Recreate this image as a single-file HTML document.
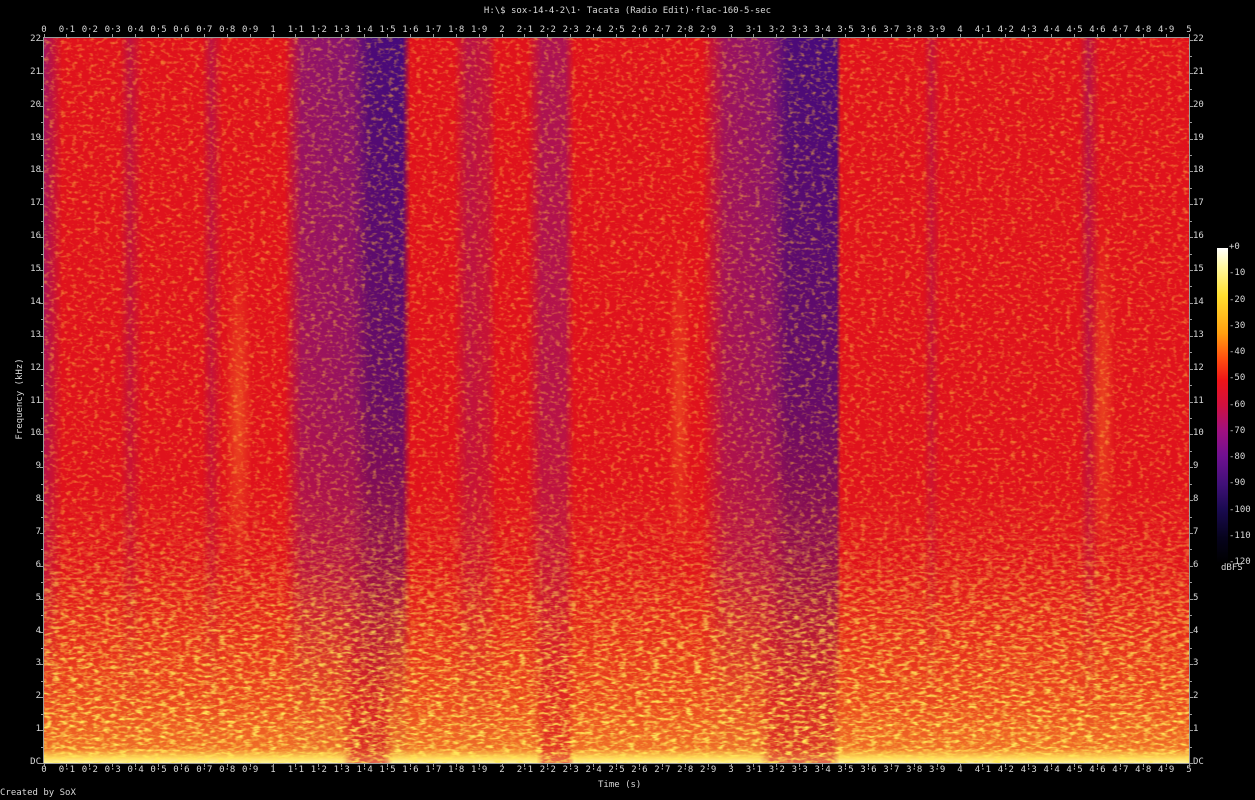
<!DOCTYPE html>
<html><head><meta charset="utf-8">
<style>
html,body{margin:0;padding:0;background:#000;width:1255px;height:800px;overflow:hidden;position:relative;font-family:"DejaVu Sans Mono","Liberation Mono",monospace;color:#d8d8d8;font-size:9px}
#plot{position:absolute;left:44px;top:38px;width:1145px;height:725px;background:#e0121c;overflow:hidden}
.l{position:absolute;left:0;top:0;width:100%;height:100%}
#purple{background:linear-gradient(to right,
 rgba(110,20,150,.55) 0%,rgba(110,20,150,0) 1.6%,
 rgba(110,20,150,0) 6.6%,rgba(110,20,150,.3) 7.5%,rgba(110,20,150,0) 8.6%,
 rgba(110,20,150,0) 13.8%,rgba(110,20,150,.3) 14.6%,rgba(110,20,150,0) 15.6%,
 rgba(110,20,150,0) 21%,rgba(100,20,150,.6) 22.5%,rgba(90,20,150,.7) 27%,rgba(60,10,130,.9) 28.5%,rgba(60,10,130,.95) 31.3%,rgba(100,20,150,0) 32%,
 rgba(110,20,150,0) 35.8%,rgba(110,20,150,.35) 37%,rgba(110,20,150,.25) 38.8%,rgba(110,20,150,0) 39.5%,
 rgba(110,20,150,0) 42.2%,rgba(110,20,150,.45) 43.5%,rgba(110,20,150,.45) 45.5%,rgba(110,20,150,0) 46.3%,
 rgba(110,20,150,0) 57.5%,rgba(100,20,150,.55) 59.5%,rgba(90,20,150,.7) 63.5%,rgba(60,10,130,.9) 65%,rgba(60,10,130,.95) 69.2%,rgba(100,20,150,0) 69.6%,
 rgba(110,20,150,0) 76.8%,rgba(110,20,150,.25) 77.5%,rgba(110,20,150,0) 78.3%,
 rgba(110,20,150,0) 90.4%,rgba(110,20,150,.35) 91.2%,rgba(110,20,150,0) 92.2%,
 rgba(110,20,150,0) 100%);
 -webkit-mask-image:linear-gradient(to bottom,#000 0%,rgba(0,0,0,.8) 50%,rgba(0,0,0,.45) 75%,rgba(0,0,0,.1) 92%);
 mask-image:linear-gradient(to bottom,#000 0%,rgba(0,0,0,.8) 50%,rgba(0,0,0,.45) 75%,rgba(0,0,0,.1) 92%)}
#yel{background:linear-gradient(to bottom,rgba(255,140,20,0) 0%,rgba(255,140,20,0) 72%,rgba(255,150,25,.18) 82%,rgba(255,170,35,.35) 92%,rgba(255,200,50,.5) 98%,rgba(255,230,90,.9) 99.2%,#fff79a 100%);
 -webkit-mask-image:linear-gradient(to right,#000 0%,#000 26%,rgba(0,0,0,.35) 27%,rgba(0,0,0,.35) 29.6%,#000 30.5%,#000 43%,rgba(0,0,0,.4) 43.6%,rgba(0,0,0,.4) 45.8%,#000 46.3%,#000 62.5%,rgba(0,0,0,.4) 63.5%,rgba(0,0,0,.4) 68.8%,#000 69.5%,#000 100%);
 mask-image:linear-gradient(to right,#000 0%,#000 26%,rgba(0,0,0,.35) 27%,rgba(0,0,0,.35) 29.6%,#000 30.5%,#000 43%,rgba(0,0,0,.4) 43.6%,rgba(0,0,0,.4) 45.8%,#000 46.3%,#000 62.5%,rgba(0,0,0,.4) 63.5%,rgba(0,0,0,.4) 68.8%,#000 69.5%,#000 100%)}
#streak{background:
 radial-gradient(ellipse 14px 180px at 17% 52%,rgba(255,170,40,.35),rgba(255,170,40,0)),
 radial-gradient(ellipse 12px 170px at 55.5% 50%,rgba(255,170,40,.3),rgba(255,170,40,0)),
 radial-gradient(ellipse 12px 190px at 92.5% 50%,rgba(255,170,40,.3),rgba(255,170,40,0))}
#bot{-webkit-mask-image:linear-gradient(to bottom,rgba(0,0,0,0) 62%,rgba(0,0,0,.7) 80%,#000 95%);mask-image:linear-gradient(to bottom,rgba(0,0,0,0) 62%,rgba(0,0,0,.7) 80%,#000 95%)}
.t{position:absolute;white-space:nowrap}
.tick{position:absolute;background:#9a9a9a}
</style></head><body>
<div class="t" style="left:0;width:1255px;text-align:center;top:6px">H:\$ sox-14-4-2\1· Tacata (Radio Edit)·flac-160-5-sec</div>
<div id="plot">
 <div class="l" id="purple"></div>
 <div class="l" id="streak"></div>
 <svg class="l" width="1145" height="725" style="opacity:.55">
  <filter id="n" x="0" y="0" width="100%" height="100%">
   <feTurbulence type="fractalNoise" baseFrequency="0.18 0.3" numOctaves="2" seed="3"/>
   <feColorMatrix type="matrix" values="0 0 0 0 1  0 0 0 0 0.5  0 0 0 0 0.05  3 0 0 0 -1.5"/>
  </filter>
  <rect width="1145" height="725" filter="url(#n)"/>
 </svg>
 <div class="l" id="yel"></div>
 <svg class="l" id="bot" width="1145" height="725">
  <filter id="m" x="0" y="0" width="100%" height="100%">
   <feTurbulence type="fractalNoise" baseFrequency="0.12 0.35" numOctaves="2" seed="9"/>
   <feColorMatrix type="matrix" values="0 0 0 0 1  0 0 0 0 0.8  0 0 0 0 0.1  3 0 0 0 -1.35"/>
  </filter>
  <rect width="1145" height="725" filter="url(#m)"/>
 </svg>
</div>
<div style="position:absolute;left:43px;top:37px;width:1147px;height:727px;border:1px solid #9a9a9a;box-sizing:border-box"></div>
<div style="position:absolute;left:1217px;top:248px;width:11px;height:315px;background:linear-gradient(to bottom,#ffffff 0%,#fff8a0 6%,#ffe030 15%,#ffa010 27%,#ff5010 35%,#f01418 42%,#d01040 50%,#a01080 58%,#701090 66%,#401078 75%,#1a0a50 83%,#06031c 92%,#000 100%)"></div>
<div class="t" style="left:1221px;top:563px">dBFS</div>
<div class="t" style="left:598px;top:780px">Time (s)</div>
<div class="t" style="left:0;top:788px">Created by SoX</div>
<div class="t" style="left:-30px;top:394px;transform:rotate(-90deg);transform-origin:center;width:100px;text-align:center">Frequency (kHz)</div>
<div id="ax"></div>
<script>
var ax=document.getElementById('ax'),h='';
var L=44,W=1145,T=38,B=763;
for(var i=0;i<=50;i++){var x=L+i*W/50;var s=i%10==0?String(i/10):(Math.floor(i/10)+'·'+(i%10));
 var w=s.length*5.4;
 h+='<div class="t" style="left:'+(x-w/2)+'px;top:25px">'+s+'</div>';
 h+='<div class="t" style="left:'+(x-w/2)+'px;top:765px">'+s+'</div>';
 h+='<div class="tick" style="left:'+(x-0.5)+'px;top:34px;width:1px;height:4px"></div>';
 h+='<div class="tick" style="left:'+(x-0.5)+'px;top:763px;width:1px;height:4px"></div>';}
for(var k=0;k<=22;k++){var y=B-k*(B-T-2)/22;var s=k==0?'DC':String(k);
 h+='<div class="t" style="right:'+(1255-41)+'px;top:'+(y-6)+'px">'+s+'</div>';
 h+='<div class="t" style="left:1193px;top:'+(y-6)+'px">'+s+'</div>';
 h+='<div class="tick" style="left:40px;top:'+y+'px;width:4px;height:1px"></div>';
 h+='<div class="tick" style="left:1189px;top:'+y+'px;width:4px;height:1px"></div>';
 if(k<22){var y2=y-(B-T-2)/44;
 h+='<div class="tick" style="left:41px;top:'+y2+'px;width:3px;height:1px"></div>';
 h+='<div class="tick" style="left:1189px;top:'+y2+'px;width:3px;height:1px"></div>';}}
for(var j=0;j<=12;j++){var y=248+j*315/12;var s=j==0?'+0':'-'+(j*10);
 h+='<div class="t" style="left:1229px;top:'+(y-6)+'px">'+s+'</div>';}
ax.innerHTML=h;
</script>
</body></html>
